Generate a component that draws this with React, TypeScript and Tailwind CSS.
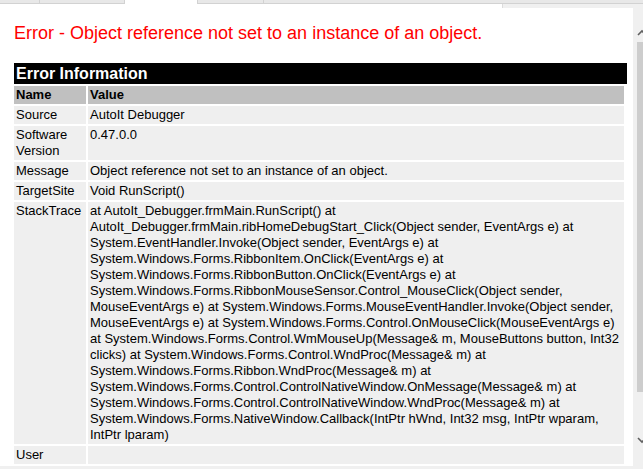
import { Fragment } from "react";

const stackTrace = [
  "at AutoIt_Debugger.frmMain.RunScript() at",
  "AutoIt_Debugger.frmMain.ribHomeDebugStart_Click(Object sender, EventArgs e) at",
  "System.EventHandler.Invoke(Object sender, EventArgs e) at",
  "System.Windows.Forms.RibbonItem.OnClick(EventArgs e) at",
  "System.Windows.Forms.RibbonButton.OnClick(EventArgs e) at",
  "System.Windows.Forms.RibbonMouseSensor.Control_MouseClick(Object sender,",
  "MouseEventArgs e) at System.Windows.Forms.MouseEventHandler.Invoke(Object sender,",
  "MouseEventArgs e) at System.Windows.Forms.Control.OnMouseClick(MouseEventArgs e)",
  "at System.Windows.Forms.Control.WmMouseUp(Message& m, MouseButtons button, Int32",
  "clicks) at System.Windows.Forms.Control.WndProc(Message& m) at",
  "System.Windows.Forms.Ribbon.WndProc(Message& m) at",
  "System.Windows.Forms.Control.ControlNativeWindow.OnMessage(Message& m) at",
  "System.Windows.Forms.Control.ControlNativeWindow.WndProc(Message& m) at",
  "System.Windows.Forms.NativeWindow.Callback(IntPtr hWnd, Int32 msg, IntPtr wparam,",
  "IntPtr lparam)",
];

const rows: { name: string; value: string[] }[] = [
  { name: "Source", value: ["AutoIt Debugger"] },
  { name: "Software Version", value: ["0.47.0.0"] },
  { name: "Message", value: ["Object reference not set to an instance of an object."] },
  { name: "TargetSite", value: ["Void RunScript()"] },
  { name: "StackTrace", value: stackTrace },
  { name: "User", value: [""] },
];

function TabStrip() {
  return (
    <div className="flex h-[4px] shrink-0">
      <div className="w-[40px] bg-[#e8e8e8] border-b border-r border-[#d2d2d2]" />
      <div className="w-[85px] bg-[#e8e8e8] border-b border-r border-[#d2d2d2]" />
      <div className="w-[72px] bg-white" />
      <div className="w-[67px] bg-[#e8e8e8] border-b border-l border-r border-[#d2d2d2]" />
      <div className="flex-1 bg-[#e8e8e8] border-b border-[#d2d2d2]" />
    </div>
  );
}

function Scrollbar() {
  return (
    <div className="w-[10px] bg-[#f0f0f0] overflow-hidden flex flex-col">
      <svg className="ml-[4px] mt-[25px] shrink-0" width="10" height="8" viewBox="0 0 10 8">
        <path d="M1 6 L5 2 L9 6" fill="none" stroke="#606060" strokeWidth="1.6" />
      </svg>
      <div className="ml-[4px] mt-[5px] w-[8px] h-[350px] bg-[#cdcdcd] shrink-0" />
      <svg className="ml-[4px] mt-[44px] shrink-0" width="10" height="8" viewBox="0 0 10 8">
        <path d="M1 2 L5 6 L9 2" fill="none" stroke="#606060" strokeWidth="1.6" />
      </svg>
    </div>
  );
}

export default function App() {
  return (
    <div className="w-[643px] h-[469px] bg-[#f0f0f0] flex flex-col overflow-hidden font-['Liberation_Sans',Arial,sans-serif]">
      <TabStrip />
      <div className="flex h-[462px] shrink-0">
        <main className="w-[633px] bg-white overflow-hidden flex flex-col">
          <div className="flex h-[4px] shrink-0">
            <div className="flex-1" />
            <div className="w-[131px] bg-[#f0f0f0] border-l border-[#dcdcdc]" />
          </div>

          <div className="pl-[14px] pt-[15px] pr-[6px]">
            <h1 className="text-[18px] leading-[21px] text-[#ff0000] font-normal">
              Error - Object reference not set to an instance of an object.
            </h1>

            <div className="mt-[19px] w-[613px] bg-black text-white font-bold text-[16px] leading-[21px] px-[2px]">
              Error Information
            </div>

            <div className="mt-[2px] w-[610px] grid grid-cols-[72px_1fr] gap-[2px] text-[13px] leading-[16px] text-black">
              <div className="bg-[#c0c0c0] font-bold px-[2px] py-[1px]">Name</div>
              <div className="bg-[#c0c0c0] font-bold px-[2px] py-[1px]">Value</div>
              {rows.map((row) => (
                <Fragment key={row.name}>
                  <div className="bg-[#efefef] px-[2px] py-[1px]">{row.name}</div>
                  <div className="bg-[#efefef] px-[2px] py-[1px] whitespace-nowrap">
                    {row.value.map((line, i) => (
                      <div key={i} className="h-[16px]">{line}</div>
                    ))}
                  </div>
                </Fragment>
              ))}
            </div>
          </div>
        </main>
        <Scrollbar />
      </div>
    </div>
  );
}
